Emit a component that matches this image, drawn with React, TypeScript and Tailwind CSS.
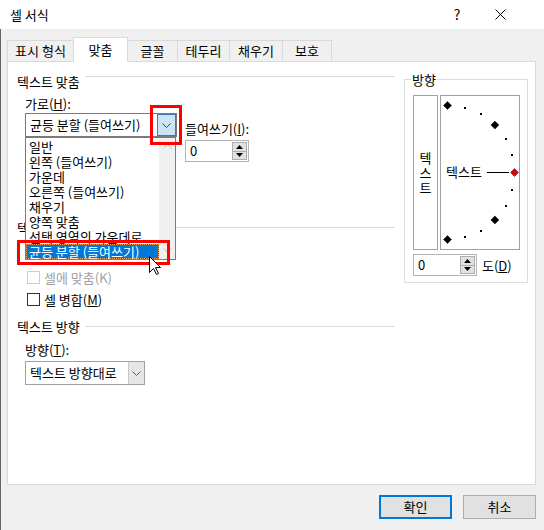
import React from "react";

function Chevron({ color = "#606060" }: { color?: string }) {
  return (
    <svg width="9" height="5" viewBox="0 0 9 5">
      <polyline points="0.5,0.5 4.5,4.5 8.5,0.5" fill="none" stroke={color} strokeWidth="1" />
    </svg>
  );
}

function Heading({ text, top }: { text: string; top?: boolean }) {
  return (
    <div className={top ? "flex items-start h-[15px]" : "flex items-center h-[15px]"}>
      <span className="leading-[15px] whitespace-nowrap">{text}</span>
      <div className={top ? "flex-1 h-px bg-[#dcdcdc] ml-[5px] mt-[2px]" : "flex-1 h-px bg-[#dcdcdc] ml-[5px]"} />
    </div>
  );
}

function Spinner() {
  return (
    <div className="w-[64px] h-[22px] border border-[#b4b4b4] bg-white flex">
      <div className="flex-1 pl-[4px] leading-[20px]">0</div>
      <div className="w-[15px] my-[1px] mr-[1px] flex flex-col">
        <div className="flex-1 bg-[#e1e1e1] border border-[#adadad] flex items-center justify-center">
          <svg width="7" height="4" viewBox="0 0 7 4"><polygon points="0,4 7,4 3.5,0" fill="#000" /></svg>
        </div>
        <div className="flex-1 bg-[#e1e1e1] border border-[#adadad] border-t-0 flex items-center justify-center">
          <svg width="7" height="4" viewBox="0 0 7 4"><polygon points="0,0 7,0 3.5,4" fill="#000" /></svg>
        </div>
      </div>
    </div>
  );
}

function Dial() {
  const cx = 6.5;
  const cy = 76.5;
  const r = 67;
  const angles = [90, 75, 60, 45, 30, 15, 0, -15, -30, -45, -60, -75, -90];
  return (
    <svg width="78" height="153" viewBox="0 0 78 153" className="absolute left-0 top-0">
      {angles.map((a) => {
        const x = cx + r * Math.cos((a * Math.PI) / 180);
        const y = cy - r * Math.sin((a * Math.PI) / 180);
        if (a % 45 === 0) {
          const fill = a === 0 ? "#e00000" : "#000";
          return (
            <polygon
              key={a}
              points={`${x},${y - 4} ${x + 4},${y} ${x},${y + 4} ${x - 4},${y}`}
              fill={fill}
              stroke={a === 0 ? "#600000" : "#000"}
              strokeWidth="0.5"
            />
          );
        }
        return <rect key={a} x={Math.round(x) - 1} y={Math.round(y) - 1} width="2" height="2" fill="#000" />;
      })}
      <line x1="46" y1="76.5" x2="68" y2="76.5" stroke="#000" strokeWidth="1" />
    </svg>
  );
}

const listItems = [
  "일반",
  "왼쪽 (들여쓰기)",
  "가운데",
  "오른쪽 (들여쓰기)",
  "채우기",
  "양쪽 맞춤",
  "선택 영역의 가운데로",
  "균등 분할 (들여쓰기)",
];

export default function App() {
  return (
    <div className="relative w-[544px] h-[530px] bg-[#f0f0f0] font-['Noto_Sans_CJK_KR',sans-serif] text-[13px] text-black overflow-hidden">
      {/* Title bar */}
      <div className="h-[29px] bg-white flex items-center">
        <span className="ml-[10px] leading-[15px]">셀 서식</span>
        <div className="flex-1" />
        <span className="w-[12px] text-center text-[14px] leading-[15px]">?</span>
        <svg width="11" height="11" viewBox="0 0 11 11" className="ml-[32px] mr-[38px]">
          <line x1="0.5" y1="0.5" x2="10.5" y2="10.5" stroke="#000" strokeWidth="1" />
          <line x1="10.5" y1="0.5" x2="0.5" y2="10.5" stroke="#000" strokeWidth="1" />
        </svg>
      </div>

      {/* Body */}
      <div className="h-[501px] border-l border-[#646464] flex flex-col">
        {/* Tabs */}
        <div className="flex items-end ml-[6px] mt-[8px] -mb-px relative z-10">
          <div className="w-[67px] h-[22px] bg-[#f0f0f0] border border-[#d9d9d9] flex items-center justify-center">표시 형식</div>
          <div className="-ml-px w-[55px] h-[25px] bg-white border border-b-0 border-[#d9d9d9] flex items-center justify-center relative z-10">맞춤</div>
          <div className="-ml-px w-[51px] h-[22px] bg-[#f0f0f0] border border-[#d9d9d9] flex items-center justify-center">글꼴</div>
          <div className="-ml-px w-[53px] h-[22px] bg-[#f0f0f0] border border-[#d9d9d9] flex items-center justify-center">테두리</div>
          <div className="-ml-px w-[54px] h-[22px] bg-[#f0f0f0] border border-[#d9d9d9] flex items-center justify-center">채우기</div>
          <div className="-ml-px w-[50px] h-[22px] bg-[#f0f0f0] border border-[#d9d9d9] flex items-center justify-center">보호</div>
        </div>

        {/* Panel */}
        <div className="ml-[6px] w-[529px] h-[424px] border border-[#d9d9d9] bg-white flex pl-[9px] pt-[12px]">
          {/* Left column */}
          <div className="w-[378px] flex flex-col">
            <Heading text="텍스트 맞춤" top />
            <div className="ml-[8px] mt-[7px] h-[15px] leading-[15px]">
              가로(<u>H</u>):
            </div>
            <div className="ml-[8px] mt-[2px] flex">
              <div className="w-[152px] h-[24px] border border-[#7a7a7a] bg-white flex">
                <div className="flex-1 pl-[4px] leading-[22px] whitespace-nowrap">균등 분할 (들여쓰기)</div>
                <div className="w-[19px] bg-[#cce4f7] border border-[#3d7ab8] flex items-center justify-center">
                  <Chevron color="#404040" />
                </div>
              </div>
              <div className="ml-[8px] flex flex-col">
                <div className="mt-[8px] h-[15px] leading-[15px] whitespace-nowrap">
                  들여쓰기(<u>I</u>):
                </div>
                <div className="mt-[4px]">
                  <Spinner />
                </div>
              </div>
            </div>

            {/* 텍스트 제어 heading: only its first glyph peeks out from behind the popup list */}
            <div className="mt-[58px] flex items-center h-[15px]">
              <span className="leading-[15px] whitespace-nowrap">텍</span>
              <div className="flex-1 h-px bg-[#dcdcdc] ml-[55px]" />
            </div>

            <div className="mt-[35px] ml-[10px] flex items-center h-[15px] text-[#a0a0a0]">
              <div className="w-[13px] h-[13px] border border-[#cccccc] bg-white" />
              <span className="ml-[4px] leading-[15px]">셀에 맞춤(K)</span>
            </div>
            <div className="mt-[7px] ml-[10px] flex items-center h-[15px]">
              <div className="w-[13px] h-[13px] border border-[#333333] bg-white" />
              <span className="ml-[4px] leading-[15px]">
                셀 병합(<u>M</u>)
              </span>
            </div>

            <div className="mt-[12px]">
              <Heading text="텍스트 방향" />
            </div>
            <div className="ml-[8px] mt-[8px] h-[15px] leading-[15px]">
              방향(<u>T</u>):
            </div>
            <div className="ml-[8px] mt-[4px] w-[120px] h-[24px] border border-[#a0a0a0] bg-white flex">
              <div className="flex-1 pl-[4px] leading-[22px] whitespace-nowrap">텍스트 방향대로</div>
              <div className="w-[16px] bg-[#e6e6e6] border-l border-[#c8c8c8] flex items-center justify-center">
                <Chevron />
              </div>
            </div>
          </div>

          {/* Right column: 방향 */}
          <div className="ml-[9px] mt-[5px] w-[124px] h-[204px] border border-[#dcdcdc] relative flex flex-col pl-[8px] pt-[15px]">
            <span className="absolute left-[6px] -top-[8px] bg-white px-px leading-[15px]">방향</span>
            <div className="flex gap-[2px]">
              <div className="w-[25px] h-[155px] border border-[#a0a0a0] flex flex-col items-center justify-center leading-[15px]">
                <span>텍</span>
                <span>스</span>
                <span>트</span>
              </div>
              <div className="relative w-[80px] h-[155px] border border-[#a0a0a0]">
                <Dial />
                <span className="absolute left-[5px] top-[68px] leading-[15px] whitespace-nowrap">텍스트</span>
              </div>
            </div>
            <div className="mt-[4px] flex items-center">
              <Spinner />
              <span className="ml-[5px] leading-[15px]">
                도(<u>D</u>)
              </span>
            </div>
          </div>
        </div>

        {/* Buttons */}
        <div className="flex justify-end gap-[11px] mt-[10px] pr-[8px]">
          <div className="w-[73px] h-[24px] border-2 border-[#0078d7] bg-[#e1e1e1] flex items-center justify-center">확인</div>
          <div className="w-[73px] h-[24px] border border-[#adadad] bg-[#e1e1e1] flex items-center justify-center">취소</div>
        </div>
      </div>

      {/* Dropdown list (popup) */}
      <div className="absolute left-[25px] top-[137px] w-[151px] h-[123px] border border-[#7a7a7a] bg-white flex">
        <div className="flex-1 pt-px flex flex-col">
          {listItems.map((it, i) =>
            i === listItems.length - 1 ? (
              <div
                key={it}
                className="h-[15px] leading-[13px] pl-[2px] bg-[#0078d7] text-white border border-dotted border-[#f0a050] whitespace-nowrap"
              >
                {it}
              </div>
            ) : (
              <div key={it} className="h-[15px] leading-[15px] pl-[3px] whitespace-nowrap">
                {it}
              </div>
            )
          )}
        </div>
        <div className="w-[16px] bg-[#f0f0f0] flex flex-col items-center justify-between py-[6px]">
          <svg width="9" height="5" viewBox="0 0 9 5"><polyline points="0.5,4.5 4.5,0.5 8.5,4.5" fill="none" stroke="#c0c0c0" strokeWidth="1" /></svg>
          <Chevron color="#c0c0c0" />
        </div>
      </div>

      {/* Red highlight rectangles */}
      <div className="absolute left-[150px] top-[105px] w-[32px] h-[40px] border-[3px] border-[#ff0000]" />
      <div className="absolute left-[17px] top-[240px] w-[153px] h-[25px] border-[3px] border-[#ff0000]" />

      {/* Mouse cursor */}
      <svg width="13" height="20" viewBox="0 0 13 20" className="absolute left-[149px] top-[256px]">
        <path d="M0.5 0.5 L0.5 16.5 L4.5 12.5 L7.5 18.5 L9.5 17.5 L6.5 11.5 L11.5 11.5 Z" fill="#fff" stroke="#000" strokeWidth="1" />
      </svg>
    </div>
  );
}
